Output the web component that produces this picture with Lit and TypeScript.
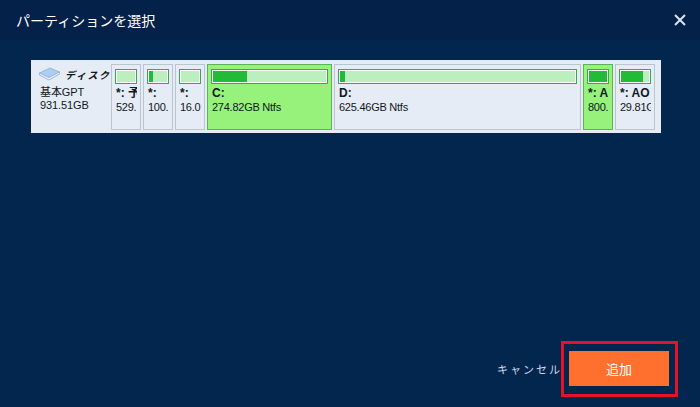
import { LitElement, html, css } from "lit";
import { customElement } from "lit/decorators.js";

interface Part { name: string; size: string; w: number; used: number; on?: boolean; }
const parts: Part[] = [
  { name: "*: 予約", size: "529.", w: 30, used: 0 },
  { name: "*:", size: "100.", w: 30, used: 22 },
  { name: "*:", size: "16.0", w: 30, used: 0 },
  { name: "C:", size: "274.82GB Ntfs", w: 125, used: 30, on: true },
  { name: "D:", size: "625.46GB Ntfs", w: 247, used: 2.2 },
  { name: "*: A", size: "800.", w: 30, used: 100, on: true },
  { name: "*: AO", size: "29.81GB", w: 40, used: 79 },
];

@customElement("app-root")
export class AppRoot extends LitElement {
  static styles = css`
    :host { display: flex; flex-direction: column; width: 700px; height: 407px; background: #03264f; color: #fff; overflow: hidden;
      font-family: "Liberation Sans", "Noto Sans CJK JP", sans-serif; }
    .title { height: 40px; flex: none; box-sizing: border-box; background: #04214a; display: flex; align-items: center; justify-content: space-between; padding: 0 14px 0 16px; font-family: "Noto Sans CJK JP", sans-serif; font-size: 14px; }
    .close { width: 12px; height: 12px; display: block; }
    .main { flex: 1; padding: 20px 39px 0 31px; }
    .panel { height: 73px; box-sizing: border-box; background: #e6ecf5; padding: 4px 0 0 0; display: flex; color: #101820; }
    .disk { width: 80px; flex: none; box-sizing: border-box; padding: 3px 0 0 8px; font-size: 11px; line-height: 13px; letter-spacing: -0.1px; white-space: nowrap; overflow: hidden; }
    .disk-h { display: flex; align-items: center; gap: 5px; height: 14px; margin-bottom: 5px; font-family: "Noto Sans CJK JP", sans-serif; font-weight: 700; font-style: italic; font-size: 10px; letter-spacing: 1.6px; }
    .disk-t { padding-left: 1px; }
    .disk svg { width: 21px; height: 14px; flex: none; }
    .parts { display: flex; gap: 2px; }
    .part { height: 66px; box-sizing: border-box; border: 1px solid #bcc4cf; padding: 4px 3px 0 3px; overflow: hidden; white-space: nowrap; font-size: 11px; line-height: 13px; }
    .part.on { background: #96f27a; border-color: #5cb255; }
    .bar { height: 15px; box-sizing: border-box; border: 1px solid #3fa452; background: #fff; padding: 1px; margin: 0 0 3px; }
    .track { height: 100%; background: #bbefbd; }
    .fill { height: 100%; background: #22bb38; }
    .name { font-weight: 700; height: 14px; padding-left: 1px; font-size: 12px; overflow: hidden; }
    .size { padding-left: 1px; overflow: hidden; letter-spacing: -0.25px; }
    .footer { display: flex; justify-content: flex-end; align-items: center; padding: 0 22px 10px 0; }
    .cancel { font-family: "Noto Sans CJK JP", sans-serif; font-size: 11px; letter-spacing: 2px; color: #cfd9e8; margin-right: -1px; }
    .frame { border: 3px solid #e4132a; padding: 7px 6px 8px 5px; }
    .add { display: flex; align-items: center; justify-content: center; width: 100px; height: 35px; background: #ff6f2e; font-family: "Noto Sans CJK JP", sans-serif; font-size: 13px; color: #fff; }
  `;

  render() {
    return html`
      <div class="title">
        <span>パーティションを選択</span>
        <svg class="close" viewBox="0 0 12 12"><path d="M1 1 11 11M11 1 1 11" stroke="#dbe5f3" stroke-width="2" fill="none"/></svg>
      </div>
      <div class="main">
        <div class="panel">
          <div class="disk">
            <div class="disk-h">
              <svg viewBox="0 0 21 14">
                <path d="M.5 6 11 1 20.5 5 10 10.5Z" fill="#a9cff7" stroke="#9db6d6"/>
                <path d="M.5 6V8L10 13 20.5 7V5L10 10.5Z" fill="#eef3fa" stroke="#9db6d6"/>
              </svg>
              <span>ディスク</span>
            </div>
            <div class="disk-t">基本GPT</div>
            <div class="disk-t">931.51GB</div>
          </div>
          <div class="parts">
            ${parts.map((p) => html`
              <div class="part ${p.on ? "on" : ""}" style="width:${p.w}px">
                <div class="bar"><div class="track"><div class="fill" style="width:${p.used}%"></div></div></div>
                <div class="name">${p.name}</div>
                <div class="size">${p.size}</div>
              </div>`)}
          </div>
        </div>
      </div>
      <div class="footer">
        <span class="cancel">キャンセル</span>
        <div class="frame"><div class="add">追加</div></div>
      </div>
    `;
  }
}
